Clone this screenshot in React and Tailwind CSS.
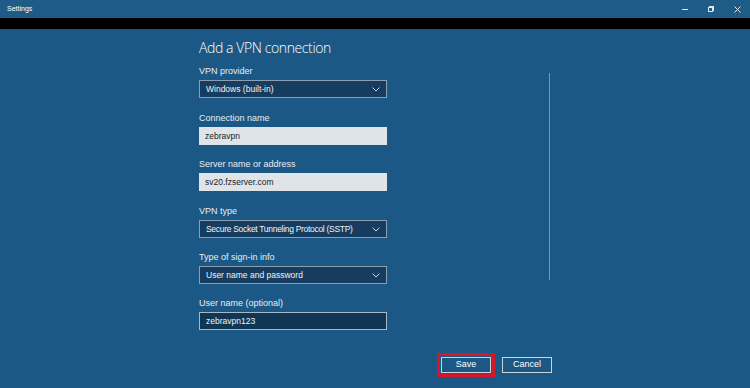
import React from "react";

const font = { fontFamily: '"Liberation Sans", Arial, sans-serif' };

function Chevron() {
  return (
    <svg width="8" height="5" viewBox="0 0 8 5" className="shrink-0">
      <path d="M0.5 0.5 L4 4 L7.5 0.5" fill="none" stroke="#c9d3dd" strokeWidth="1" />
    </svg>
  );
}

function Label({ children, mt }) {
  return (
    <div className={`text-[9px] leading-[11px] text-[#e6edf3] whitespace-nowrap ${mt}`}>{children}</div>
  );
}

function Select({ value, tight }) {
  return (
    <div className="mt-[3px] flex h-[18px] w-[188px] items-center justify-between border border-[#8c9fb2] bg-[#163d60] pl-[6px] pr-[6px] text-[8.5px] text-[#eef3f7] whitespace-nowrap">
      <span className={tight ? "tracking-[-0.3px]" : ""}>{value}</span>
      <Chevron />
    </div>
  );
}

function LightInput({ value }) {
  return (
    <div className="mt-[3px] flex h-[18px] w-[188px] items-center bg-[#dfe4e9] pl-[6px] text-[8.5px] text-[#1d1d1d]">
      {value}
    </div>
  );
}

function DarkInput({ value }) {
  return (
    <div className="mt-[3px] flex h-[18px] w-[188px] items-center border border-[#a9b8c6] bg-[#113654] pl-[6px] text-[8.5px] text-[#eef3f7]">
      {value}
    </div>
  );
}

export default function App() {
  return (
    <div className="flex h-[388px] w-[750px] flex-col overflow-hidden bg-[#1c5885]" style={font}>
      <div className="flex h-[18px] shrink-0 items-center justify-between bg-[#1f5b87] pl-[7px] pr-[9px] text-white">
        <span className="text-[7px]">Settings</span>
        <div className="flex items-center gap-[20px] text-[#dfe7ee]">
          <div className="h-[1px] w-[6px] bg-[#dfe7ee]" />
          <div className="relative h-[6px] w-[6px]">
            <div className="absolute left-[1px] top-0 h-[5px] w-[5px] border border-[#dfe7ee]" />
            <div className="absolute left-0 top-[1px] h-[5px] w-[5px] border border-[#dfe7ee] bg-[#1f5b87]" />
          </div>
          <svg width="7" height="7" viewBox="0 0 7 7">
            <path d="M0.5 0.5 L6.5 6.5 M6.5 0.5 L0.5 6.5" stroke="#dfe7ee" strokeWidth="1" />
          </svg>
        </div>
      </div>
      <div className="h-[11px] shrink-0 bg-black" />
      <div className="relative flex min-h-0 flex-1 flex-col">
        <div className="absolute left-[549px] top-[44px] h-[207px] w-[1px] bg-[#6a9ac2]" />
        <div className="ml-[199px] flex flex-col pt-[10px]">
          <div
            className="whitespace-nowrap text-[14px] font-light leading-[18px] tracking-[-0.4px] text-white"
            style={{ fontFamily: '"Open Sans", "Liberation Sans", sans-serif' }}
          >
            Add a VPN connection
          </div>
          <Label mt="mt-[9px]">VPN provider</Label>
          <Select value="Windows (built-in)" />
          <Label mt="mt-[15px]">Connection name</Label>
          <LightInput value="zebravpn" />
          <Label mt="mt-[14px]">Server name or address</Label>
          <LightInput value="sv20.fzserver.com" />
          <Label mt="mt-[15px]">VPN type</Label>
          <Select value="Secure Socket Tunneling Protocol (SSTP)" tight />
          <Label mt="mt-[14px]">Type of sign-in info</Label>
          <Select value="User name and password" />
          <Label mt="mt-[14px]">User name (optional)</Label>
          <DarkInput value="zebravpn123" />
        </div>
        <div className="ml-[437px] mt-[23px] flex items-center gap-[7px]">
          <div className="border-[3px] border-[#d3182b] p-[1px]">
            <div className="flex h-[16px] w-[50px] items-center justify-center border border-[#c9d3dc] text-[9px] text-white">
              Save
            </div>
          </div>
          <div className="flex h-[16px] w-[50px] items-center justify-center border border-[#c9d3dc] text-[9px] text-white">
            Cancel
          </div>
        </div>
      </div>
    </div>
  );
}
